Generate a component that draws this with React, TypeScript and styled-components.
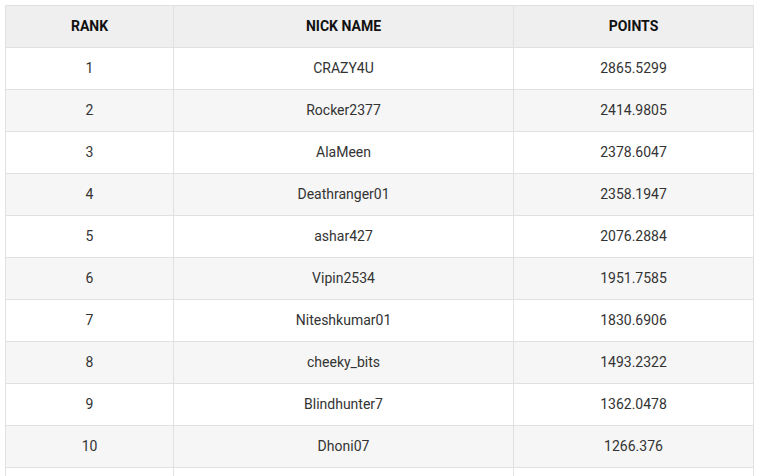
import React from 'react';
import styled, {createGlobalStyle} from 'styled-components';

const GlobalStyle = createGlobalStyle`
	body {
		margin: 0;
		background: #fff;
		font-family: Roboto, 'Liberation Sans', sans-serif;
	}
`;

const Wrapper = styled.div`
	padding: 5px;
`;

const Table = styled.table`
	border-collapse: collapse;
	table-layout: fixed;
	font-size: 14px;
`;

const Head = styled.th<{w: number}>`
	width: ${p => p.w}px;
	height: 39px;
	padding: 0 0 2px;
	background: #efefef;
	border: 1px solid #e1e1e1;
	color: #111;
	font-weight: 700;
	text-transform: uppercase;
	text-align: center;
`;

const Row = styled.tr<{striped: boolean}>`
	background: ${p => (p.striped ? '#f6f6f6' : '#fff')};
`;

const Cell = styled.td`
	height: 39px;
	padding: 0 0 2px;
	border: 1px solid #e1e1e1;
	color: #333;
	text-align: center;
`;

const players = [
	{rank: '1', nick: 'CRAZY4U', points: '2865.5299'},
	{rank: '2', nick: 'Rocker2377', points: '2414.9805'},
	{rank: '3', nick: 'AlaMeen', points: '2378.6047'},
	{rank: '4', nick: 'Deathranger01', points: '2358.1947'},
	{rank: '5', nick: 'ashar427', points: '2076.2884'},
	{rank: '6', nick: 'Vipin2534', points: '1951.7585'},
	{rank: '7', nick: 'Niteshkumar01', points: '1830.6906'},
	{rank: '8', nick: 'cheeky_bits', points: '1493.2322'},
	{rank: '9', nick: 'Blindhunter7', points: '1362.0478'},
	{rank: '10', nick: 'Dhoni07', points: '1266.376'},
	// next row only peeks in at the bottom edge
	{rank: '', nick: '', points: ''},
];

export default () => (
	<Wrapper>
		<GlobalStyle />
		<Table>
			<thead>
				<tr>
					<Head w={167}>Rank</Head>
					<Head w={339}>Nick Name</Head>
					<Head w={239}>Points</Head>
				</tr>
			</thead>
			<tbody>
				{players.map((p, i) => (
					<Row key={i} striped={i % 2 === 1}>
						<Cell>{p.rank}</Cell>
						<Cell>{p.nick}</Cell>
						<Cell>{p.points}</Cell>
					</Row>
				))}
			</tbody>
		</Table>
	</Wrapper>
);
